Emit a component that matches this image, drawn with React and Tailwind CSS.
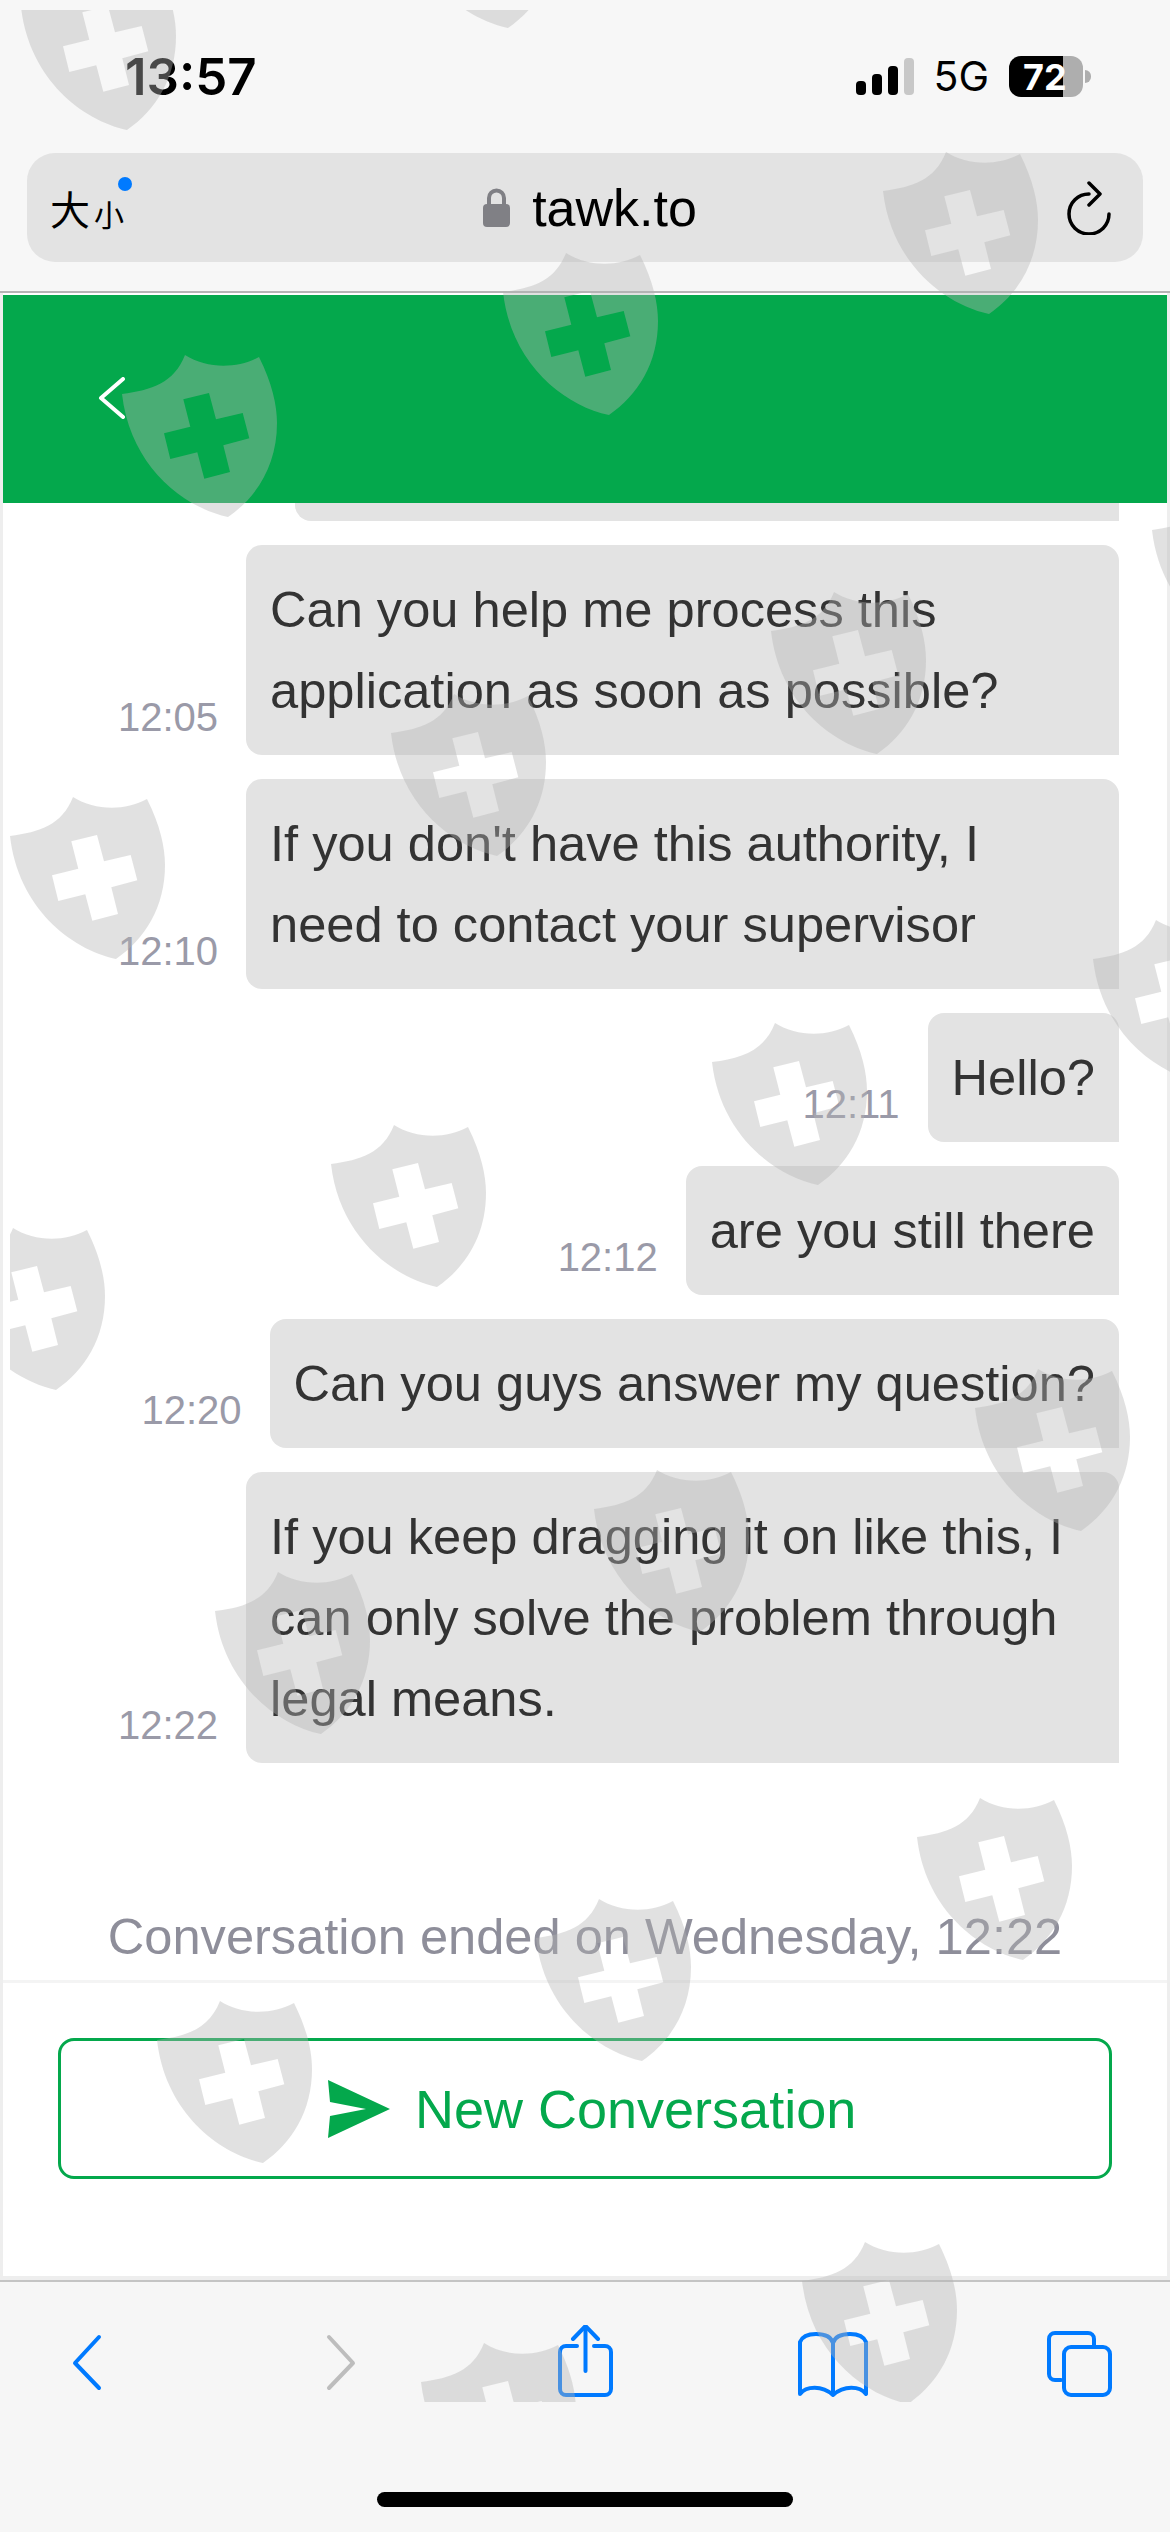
import React from 'react';

const messages = [
  { time: '12:05', lines: ['Can you help me process this', 'application as soon as possible?'], wide: true },
  { time: '12:10', lines: ["If you don't have this authority, I", 'need to contact your supervisor'], wide: true },
  { time: '12:11', lines: ['Hello?'] },
  { time: '12:12', lines: ['are you still there'] },
  { time: '12:20', lines: ['Can you guys answer my question?'] },
  { time: '12:22', lines: ['If you keep dragging it on like this, I', 'can only solve the problem through', 'legal means.'], wide: true },
];

// top-left corner of every watermark shield, in page pixels
const shields = [
  [21, -32], [402, -134], [883, 152], [503, 253], [122, 355], [1152, 491], [771, 592],
  [391, 694], [10, 797], [1093, 920], [712, 1023], [331, 1125], [-50, 1228], [975, 1369],
  [594, 1470], [215, 1572], [917, 1798], [536, 1899], [157, 2001], [802, 2242], [421, 2343],
];

const shieldPath =
  'M63 0C85 14 115 14 137 2C150 28 155 50 155 68C155 110 135 142 106 162C60 152 8 110 0 39C30 35 52 28 63 0Z' +
  'M61.3 44.3L87 38L94 64.3L120.7 58L127.3 83.3L101.3 90.3L108 117L82.3 123.7L75.3 97.3L48.3 104L42 78.3L68.3 71.7Z';

const Watermark = () => (
  <svg
    className="absolute left-[10px] top-[10px] pointer-events-none"
    width="1160"
    height="2392"
    viewBox="10 10 1160 2392"
  >
    {shields.map(([x, y], i) => (
      <path key={i} d={shieldPath} transform={`translate(${x} ${y})`} fill="#b4b4b4" fillOpacity="0.4" fillRule="evenodd" />
    ))}
  </svg>
);

const StatusBar = () => (
  <div className="h-[153px] flex items-center justify-between pl-[125px] pr-[79px] text-black">
    <span className="font-['Inter',sans-serif] font-semibold text-[51px] leading-none">13:57</span>
    <div className="flex items-center">
      <svg width="58" height="37" viewBox="0 0 58 37">
        <rect x="0" y="23" width="10" height="14" rx="4" fill="#000" />
        <rect x="16" y="16" width="10" height="21" rx="4" fill="#000" />
        <rect x="32" y="8" width="10" height="29" rx="4" fill="#000" />
        <rect x="48" y="0" width="10" height="37" rx="4" fill="#c8c8c8" />
      </svg>
      <span className="ml-[19px] font-['Inter',sans-serif] text-[41px] leading-none">5G</span>
      <div className="ml-[20px] w-[74px] h-[41px] rounded-[12px] flex items-center pl-[14px] bg-[linear-gradient(90deg,#000_54px,#aeaeae_54px)]">
        <span className="font-['Inter',sans-serif] font-bold text-[36px] leading-none text-white">72</span>
      </div>
      <div className="ml-[2px] w-[6px] h-[13px] rounded-r-full bg-[#aeaeae]"></div>
    </div>
  </div>
);

const AddressBar = () => (
  <div className="mx-[27px] h-[109px] rounded-[28px] bg-[#e3e3e3] grid grid-cols-[1fr_auto_1fr] items-center px-[23px]">
    <div className="relative w-fit flex items-end font-['Noto_Sans_CJK_SC',sans-serif] text-black leading-none">
      <span className="text-[40px]">大</span>
      <span className="ml-[4px] text-[30px]">小</span>
      <span className="absolute left-[68px] -top-[11px] w-[14px] h-[14px] rounded-full bg-[#007aff]"></span>
    </div>
    <div className="ml-[10px] flex items-center gap-[22px]">
      <svg width="27" height="39" viewBox="0 0 27 39">
        <path d="M6 18V10a7.500 7.500 0 0 1 15 0v8" fill="none" stroke="#808085" strokeWidth="4" />
        <rect x="0" y="16" width="27" height="23" rx="4" fill="#808085" />
      </svg>
      <span className="font-['Liberation_Sans',sans-serif] text-[52px] leading-none text-black">tawk.to</span>
    </div>
    <div className="flex justify-end pr-[8px]">
      <svg width="45" height="54" viewBox="0 0 45 54" fill="none" stroke="#000" strokeWidth="3.500" strokeLinecap="round" strokeLinejoin="round">
        <path d="M22 13A20 20 0 1 0 42 33" />
        <path d="M22 2L33 13L22 24" />
      </svg>
    </div>
  </div>
);

const Bubble = ({ lines, wide }) => (
  <div className={`bg-[#e3e3e3] rounded-[16px] rounded-br-none px-[24px] py-[24px] text-[50.6px] leading-[81px] text-[#333333] whitespace-nowrap ${wide ? 'w-[873px]' : ''}`}>
    {lines.map((line) => (
      <div key={line}>{line}</div>
    ))}
  </div>
);

const Toolbar = () => (
  <div className="flex-1 bg-[#f6f6f6] flex flex-col">
    <div className="flex pt-[43px]">
      <svg className="ml-[72px]" width="30" height="72" viewBox="0 0 30 72" fill="none" stroke="#007aff" strokeWidth="4" strokeLinecap="round" strokeLinejoin="round">
        <path d="M27 12L3 38L27 63" />
      </svg>
      <svg className="ml-[224px]" width="30" height="72" viewBox="0 0 30 72" fill="none" stroke="#bdbdbd" strokeWidth="4" strokeLinecap="round" strokeLinejoin="round">
        <path d="M3 12L27 38L3 63" />
      </svg>
      <svg className="ml-[202px]" width="55" height="72" viewBox="0 0 55 72" fill="none" stroke="#007aff" strokeWidth="4" strokeLinecap="round" strokeLinejoin="round">
        <path d="M19 21H8a6 6 0 0 0-6 6V64a6 6 0 0 0 6 6H47a6 6 0 0 0 6-6V27a6 6 0 0 0-6-6H36" />
        <path d="M27.500 2V46" />
        <path d="M15 14L27.500 1L40 14" />
      </svg>
      <svg className="ml-[185px]" width="70" height="72" viewBox="0 0 70 72" fill="none" stroke="#007aff" strokeWidth="4" strokeLinecap="round" strokeLinejoin="round">
        <path d="M35 18C33 11 25 9 18 9C10 9 4 12 2 17V69C8 61 24 60 35 70C46 60 62 61 68 69V17C66 12 60 9 52 9C45 9 37 11 35 18V68" />
      </svg>
      <svg className="ml-[179px]" width="65" height="72" viewBox="0 0 65 72" fill="none" stroke="#007aff" strokeWidth="4" strokeLinecap="round" strokeLinejoin="round">
        <path d="M14 55H8a6 6 0 0 1-6-6V14a6 6 0 0 1 6-6H41a6 6 0 0 1 6 6V21" />
        <rect x="17" y="22" width="46" height="48" rx="7" />
      </svg>
    </div>
    <div className="mt-[95px] mx-auto w-[416px] h-[15px] rounded-full bg-black"></div>
  </div>
);

const App = () => (
  <div className="relative w-[1170px] h-[2532px] overflow-hidden bg-white flex flex-col font-['Liberation_Sans',sans-serif]">
    <div className="h-[291px] bg-[#f7f7f7] shrink-0">
      <StatusBar />
      <AddressBar />
    </div>
    <div className="h-[2px] bg-[#b5b5b5] shrink-0"></div>

    {/* web view */}
    <div className="h-[1987px] shrink-0 pt-[2px] border-x-[3px] border-b-[4px] border-[#eeeeee] flex flex-col bg-white">
      <div className="h-[208px] shrink-0 bg-[#04a84c] pl-[95px] pt-[82px]">
        <svg width="28" height="42" viewBox="0 0 28 42" fill="none" stroke="#fff" strokeWidth="4" strokeLinecap="round" strokeLinejoin="round">
          <path d="M25 2L3 21L25 40" />
        </svg>
      </div>

      <div className="h-[1477px] shrink-0 overflow-hidden pr-[48px] flex flex-col items-end">
        <div className="-mt-[111px] w-[824px] h-[129px] shrink-0 bg-[#e3e3e3] rounded-[16px] rounded-br-none"></div>
        {messages.map((msg) => (
          <div key={msg.time} className="mt-[24px] flex items-end gap-[28px]">
            <span className="text-[40px] leading-[48px] mb-[14px] text-[#9a9aa8]">{msg.time}</span>
            <Bubble lines={msg.lines} wide={msg.wide} />
          </div>
        ))}
        <div className="mt-[144px] w-full pl-[48px] text-center text-[50.6px] leading-[60px] text-[#8e8e9a]">
          Conversation ended on Wednesday, 12:22
        </div>
      </div>

      <div className="flex-1 border-t-[3px] border-[#f4f4f4] px-[55px] pt-[55px]">
        <div className="h-[141px] border-[3px] border-[#04a84c] rounded-[16px] flex items-center pl-[266px] gap-[24px] text-[#04a84c]">
          <svg width="64" height="58" viewBox="0 0 64 58">
            <path d="M1 0L63 29L1 58L3 36L39 29L3 22Z" fill="#04a84c" />
          </svg>
          <span className="text-[54px] leading-none">New Conversation</span>
        </div>
      </div>
    </div>

    <div className="h-[2px] bg-[#c4c4c4] shrink-0"></div>
    <Toolbar />
    <Watermark />
  </div>
);

export default App;
